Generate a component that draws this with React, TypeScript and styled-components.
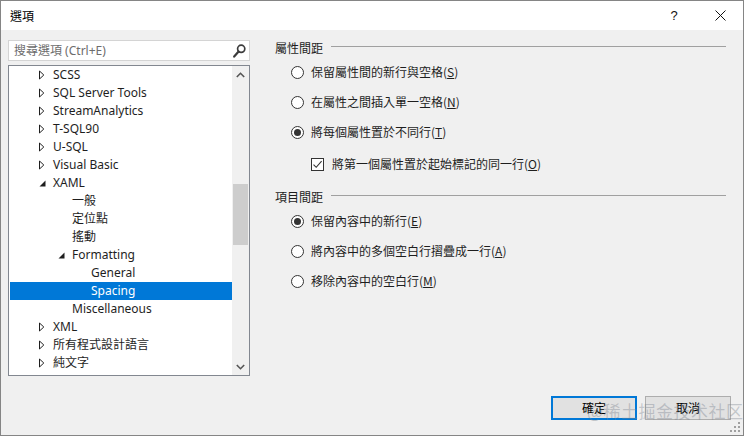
import React from "react";
import styled, { createGlobalStyle } from "styled-components";

const Global = createGlobalStyle`
  html, body { margin: 0; padding: 0; background: #ffffff; }
  * { box-sizing: border-box; }
`;

const UI_FONT = `"Noto Sans", "Noto Sans CJK TC", sans-serif`;
const CJK_FONT = `"Noto Sans CJK TC", "Noto Sans", sans-serif`;

const Window = styled.div`
  position: relative;
  width: 744px;
  height: 436px;
  border: 1px solid #858585;
  display: flex;
  flex-direction: column;
  font-family: ${UI_FONT};
  color: #1e1e1e;
  overflow: hidden;
`;

const TitleBar = styled.div`
  height: 29px;
  background: #ffffff;
  display: flex;
  align-items: center;
  padding-left: 9px;
  flex-shrink: 0;
`;

const TitleText = styled.div`
  font-family: ${CJK_FONT};
  font-size: 12px;
  color: #000;
  flex: 1;
  line-height: 1;
  margin-top: 1px;
`;

const CaptionButton = styled.div`
  width: 46px;
  height: 29px;
  display: flex;
  align-items: center;
  justify-content: center;
  font-family: "Liberation Sans", sans-serif;
  font-size: 13px;
  color: #111;
`;

const Body = styled.div`
  flex: 1;
  background: #f0f0f0;
  display: flex;
  flex-direction: column;
`;

const Main = styled.div`
  flex: 1;
  display: flex;
  padding-top: 10px;
`;

const LeftPane = styled.div`
  margin-left: 7px;
  width: 242px;
  display: flex;
  flex-direction: column;
  gap: 4px;
`;

const SearchBox = styled.div`
  height: 21px;
  background: #ffffff;
  border: 1px solid #d4d4d4;
  display: flex;
  align-items: center;
  padding: 0 3px 0 5px;
`;

const SearchPlaceholder = styled.span`
  flex: 1;
  font-size: 12px;
  color: #6d6d6d;
  line-height: 1;
  font-family: ${UI_FONT};
`;

const Tree = styled.div`
  height: 311px;
  background: #ffffff;
  border: 1px solid #828790;
  display: flex;
`;

const TreeList = styled.div`
  flex: 1;
  padding-left: 1px;
  display: flex;
  flex-direction: column;
`;

const Row = styled.div<{ $selected?: boolean }>`
  height: 18px;
  display: flex;
  align-items: center;
  font-size: 12px;
  white-space: nowrap;
  background: ${(p) => (p.$selected ? "#0078d7" : "transparent")};
  color: ${(p) => (p.$selected ? "#ffffff" : "#1e1e1e")};
`;

const Indent = styled.div<{ $level: number }>`
  width: ${(p) => 26 + p.$level * 19}px;
  flex-shrink: 0;
`;

const ArrowSlot = styled.div`
  width: 17px;
  height: 18px;
  flex-shrink: 0;
  display: flex;
  align-items: center;
  padding-left: 3px;
`;

const RowText = styled.span`
  line-height: 1;
  font-family: ${UI_FONT};
`;

const ScrollBar = styled.div`
  width: 17px;
  background: #f0f0f0;
  display: flex;
  flex-direction: column;
`;

const ScrollButton = styled.div`
  height: 17px;
  display: flex;
  align-items: center;
  justify-content: center;
  flex-shrink: 0;
`;

const ScrollTrack = styled.div`
  flex: 1;
  display: flex;
  flex-direction: column;
  align-items: center;
`;

const Thumb = styled.div<{ $offset: number; $size: number }>`
  margin-top: ${(p) => p.$offset}px;
  width: 15px;
  height: ${(p) => p.$size}px;
  background: #cdcdcd;
`;

const RightPane = styled.div`
  flex: 1;
  margin-left: 25px;
  padding-right: 17px;
  display: flex;
  flex-direction: column;
`;

const Section = styled.div<{ $gapTop?: number }>`
  display: flex;
  flex-direction: column;
  margin-top: ${(p) => p.$gapTop ?? 0}px;
`;

const GroupHeader = styled.div`
  height: 16px;
  display: flex;
  align-items: center;
`;

const GroupTitle = styled.span`
  font-family: ${CJK_FONT};
  font-size: 12px;
  color: #1e1e1e;
  line-height: 1;
`;

const GroupLine = styled.div`
  flex: 1;
  height: 1px;
  background: #a0a0a0;
  margin-left: 8px;
  margin-bottom: 4px;
`;

const OptionList = styled.div`
  display: flex;
  flex-direction: column;
  padding-left: 16px;
  padding-top: 1px;
`;

const OptionRow = styled.div<{ $indent?: number; $gapTop?: number }>`
  height: 30px;
  display: flex;
  align-items: center;
  gap: 7px;
  padding-left: ${(p) => p.$indent ?? 0}px;
  margin-top: ${(p) => p.$gapTop ?? 0}px;
`;

const RadioCircle = styled.div<{ $checked?: boolean }>`
  width: 13px;
  height: 13px;
  border-radius: 50%;
  border: 1px solid #333333;
  background: #ffffff;
  display: flex;
  align-items: center;
  justify-content: center;
  flex-shrink: 0;
  &::after {
    content: "";
    display: ${(p) => (p.$checked ? "block" : "none")};
    width: 7px;
    height: 7px;
    border-radius: 50%;
    background: #333333;
  }
`;

const CheckBox = styled.div`
  width: 13px;
  height: 13px;
  border: 1px solid #333333;
  background: #ffffff;
  display: flex;
  align-items: center;
  justify-content: center;
  flex-shrink: 0;
  margin-right: 1px;
`;

const OptionLabel = styled.span`
  font-family: ${CJK_FONT};
  font-size: 12px;
  color: #1e1e1e;
  line-height: 1;
  white-space: nowrap;
  u {
    text-underline-offset: 1px;
  }
`;

const Footer = styled.div`
  display: flex;
  justify-content: flex-end;
  gap: 8px;
  padding: 0 12px 15px 0;
`;

const Button = styled.div<{ $default?: boolean }>`
  width: 86px;
  height: 24px;
  background: #e1e1e1;
  border: ${(p) => (p.$default ? "2px solid #0078d7" : "1px solid #adadad")};
  display: flex;
  align-items: center;
  justify-content: center;
  font-family: ${CJK_FONT};
  font-size: 12px;
  color: #000;
  line-height: 1;
`;

const Watermark = styled.div`
  position: absolute;
  left: 586px;
  top: 397px;
  font-family: "Noto Sans CJK SC", sans-serif;
  font-size: 17px;
  color: rgba(120, 128, 140, 0.38);
  letter-spacing: 0.5px;
  pointer-events: none;
  white-space: nowrap;
`;

const Grip = styled.svg`
  position: absolute;
  right: 2px;
  bottom: 2px;
`;

const CollapsedArrow = () => (
  <svg width="6" height="10" viewBox="0 0 6 10">
    <path d="M0.5 1 L4.8 5 L0.5 9 Z" fill="none" stroke="#1e1e1e" strokeWidth="1" />
  </svg>
);

const ExpandedArrow = () => (
  <svg width="7" height="7" viewBox="0 0 7 7">
    <path d="M6.5 0.5 L6.5 6.5 L0.5 6.5 Z" fill="#1e1e1e" />
  </svg>
);

type Node = { label: string; level: number; arrow?: "collapsed" | "expanded"; selected?: boolean };

const nodes: Node[] = [
  { label: "SCSS", level: 0, arrow: "collapsed" },
  { label: "SQL Server Tools", level: 0, arrow: "collapsed" },
  { label: "StreamAnalytics", level: 0, arrow: "collapsed" },
  { label: "T-SQL90", level: 0, arrow: "collapsed" },
  { label: "U-SQL", level: 0, arrow: "collapsed" },
  { label: "Visual Basic", level: 0, arrow: "collapsed" },
  { label: "XAML", level: 0, arrow: "expanded" },
  { label: "一般", level: 1 },
  { label: "定位點", level: 1 },
  { label: "搖動", level: 1 },
  { label: "Formatting", level: 1, arrow: "expanded" },
  { label: "General", level: 2 },
  { label: "Spacing", level: 2, selected: true },
  { label: "Miscellaneous", level: 1 },
  { label: "XML", level: 0, arrow: "collapsed" },
  { label: "所有程式設計語言", level: 0, arrow: "collapsed" },
  { label: "純文字", level: 0, arrow: "collapsed" },
];

const Radio = ({ checked, text, mn }: { checked?: boolean; text: string; mn: string }) => (
  <>
    <RadioCircle $checked={checked} />
    <OptionLabel>
      {text}(<u>{mn}</u>)
    </OptionLabel>
  </>
);

export default function App() {
  return (
    <>
      <Global />
      <Window>
        <TitleBar>
          <TitleText>選項</TitleText>
          <CaptionButton>?</CaptionButton>
          <CaptionButton>
            <svg width="11" height="11" viewBox="0 0 11 11">
              <path d="M0.5 0.5 L10.5 10.5 M10.5 0.5 L0.5 10.5" stroke="#111" strokeWidth="1" />
            </svg>
          </CaptionButton>
        </TitleBar>
        <Body>
          <Main>
            <LeftPane>
              <SearchBox>
                <SearchPlaceholder>搜尋選項 (Ctrl+E)</SearchPlaceholder>
                <svg width="13" height="14" viewBox="0 0 13 14">
                  <circle cx="8.2" cy="4.8" r="3.6" fill="none" stroke="#3c3c3c" strokeWidth="1.7" />
                  <path d="M5.6 7.6 L1.2 12.6" stroke="#3c3c3c" strokeWidth="2.2" strokeLinecap="round" />
                </svg>
              </SearchBox>
              <Tree>
                <TreeList>
                  {nodes.map((n) => (
                    <Row key={n.label} $selected={n.selected}>
                      <Indent $level={n.level} />
                      <ArrowSlot>
                        {n.arrow === "collapsed" && <CollapsedArrow />}
                        {n.arrow === "expanded" && <ExpandedArrow />}
                      </ArrowSlot>
                      <RowText>{n.label}</RowText>
                    </Row>
                  ))}
                </TreeList>
                <ScrollBar>
                  <ScrollButton>
                    <svg width="9" height="6" viewBox="0 0 9 6">
                      <path d="M0.8 5 L4.5 1.3 L8.2 5" fill="none" stroke="#555" strokeWidth="1.6" />
                    </svg>
                  </ScrollButton>
                  <ScrollTrack>
                    <Thumb $offset={101} $size={61} />
                  </ScrollTrack>
                  <ScrollButton>
                    <svg width="9" height="6" viewBox="0 0 9 6">
                      <path d="M0.8 1 L4.5 4.7 L8.2 1" fill="none" stroke="#555" strokeWidth="1.6" />
                    </svg>
                  </ScrollButton>
                </ScrollBar>
              </Tree>
            </LeftPane>
            <RightPane>
              <Section>
                <GroupHeader>
                  <GroupTitle>屬性間距</GroupTitle>
                  <GroupLine />
                </GroupHeader>
                <OptionList>
                  <OptionRow>
                    <Radio text="保留屬性間的新行與空格" mn="S" />
                  </OptionRow>
                  <OptionRow>
                    <Radio text="在屬性之間插入單一空格" mn="N" />
                  </OptionRow>
                  <OptionRow>
                    <Radio checked text="將每個屬性置於不同行" mn="T" />
                  </OptionRow>
                  <OptionRow $indent={20} $gapTop={2}>
                    <CheckBox>
                      <svg width="11" height="11" viewBox="0 0 11 11">
                        <path d="M1.5 5.6 L4.2 8.3 L9.6 2.2" fill="none" stroke="#333" strokeWidth="1.1" />
                      </svg>
                    </CheckBox>
                    <OptionLabel>
                      將第一個屬性置於起始標記的同一行(<u>O</u>)
                    </OptionLabel>
                  </OptionRow>
                </OptionList>
              </Section>
              <Section $gapTop={10}>
                <GroupHeader>
                  <GroupTitle>項目間距</GroupTitle>
                  <GroupLine />
                </GroupHeader>
                <OptionList>
                  <OptionRow>
                    <Radio checked text="保留內容中的新行" mn="E" />
                  </OptionRow>
                  <OptionRow>
                    <Radio text="將內容中的多個空白行摺疊成一行" mn="A" />
                  </OptionRow>
                  <OptionRow>
                    <Radio text="移除內容中的空白行" mn="M" />
                  </OptionRow>
                </OptionList>
              </Section>
            </RightPane>
          </Main>
          <Footer>
            <Button $default>確定</Button>
            <Button>取消</Button>
          </Footer>
        </Body>
        <Watermark>@稀土掘金技术社区</Watermark>
        <Grip width="11" height="11" viewBox="0 0 11 11">
          <g fill="#a0a0a0">
            <rect x="8" y="0" width="2" height="2" />
            <rect x="4" y="4" width="2" height="2" />
            <rect x="8" y="4" width="2" height="2" />
            <rect x="0" y="8" width="2" height="2" />
            <rect x="4" y="8" width="2" height="2" />
            <rect x="8" y="8" width="2" height="2" />
          </g>
        </Grip>
      </Window>
    </>
  );
}
